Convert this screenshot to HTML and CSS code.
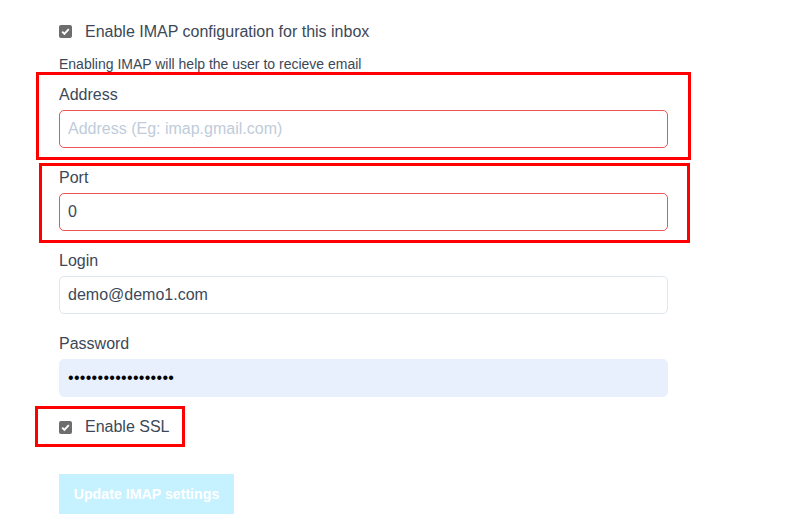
FILE: index.html
```html
<!DOCTYPE html>
<html lang="en">
<head>
<meta charset="utf-8">
<title>IMAP settings</title>
<link rel="stylesheet" href="styles.css">
</head>
<body>
<form class="imap-form">
  <div class="check-row">
    <span class="checkbox"><svg viewBox="0 0 13 13" width="13" height="13"><path d="M3.2 6.7 L5.4 8.9 L9.8 4.2" fill="none" stroke="#fff" stroke-width="1.9"/></svg></span>
    <span class="check-label">Enable IMAP configuration for this inbox</span>
  </div>
  <p class="help">Enabling IMAP will help the user to recieve email</p>

  <div class="field">
    <div class="annot annot-address"></div>
    <label class="field-label">Address</label>
    <input class="input input-error" type="text" placeholder="Address (Eg: imap.gmail.com)">
  </div>

  <div class="field">
    <div class="annot annot-port"></div>
    <label class="field-label">Port</label>
    <input class="input input-error" type="text" value="0">
  </div>

  <div class="field">
    <label class="field-label">Login</label>
    <input class="input" type="text" value="demo@demo1.com">
  </div>

  <div class="field">
    <label class="field-label">Password</label>
    <input class="input input-autofill" type="password" value="demopassword123456">
  </div>

  <div class="check-row check-ssl">
    <div class="annot annot-ssl"></div>
    <span class="checkbox"><svg viewBox="0 0 13 13" width="13" height="13"><path d="M3.2 6.7 L5.4 8.9 L9.8 4.2" fill="none" stroke="#fff" stroke-width="1.9"/></svg></span>
    <span class="check-label">Enable SSL</span>
  </div>

  <button class="btn" type="button">Update IMAP settings</button>
</form>
</body>
</html>
```
FILE: styles.css
```css
* { box-sizing: border-box; }
html, body { margin: 0; padding: 0; background: #fff; }
body {
  font-family: "Liberation Sans", Arial, sans-serif;
  color: #3c4858;
}
.imap-form {
  width: 609px;
  margin-left: 59px;
  padding-top: 20px;
  display: flex;
  flex-direction: column;
  align-items: stretch;
}
.check-row {
  position: relative;
  display: flex;
  align-items: center;
  height: 24px;
  font-size: 16px;
}
.checkbox {
  width: 13px;
  height: 13px;
  border-radius: 2px;
  background: #6d6d6d;
  display: flex;
  margin-right: 13px;
  margin-bottom: 2px;
  flex: none;
}
.checkbox svg { display: block; }
.help {
  margin: 10px 0 8px;
  font-size: 14px;
  line-height: 20px;
  color: #3c4858;
}
.field {
  position: relative;
  display: flex;
  flex-direction: column;
  margin-bottom: 17px;
}
.field-label {
  font-size: 16px;
  line-height: 26px;
  margin-bottom: 2px;
  color: #3c4858;
}
.input {
  height: 38px;
  width: 100%;
  border: 1px solid #e0e6ed;
  border-radius: 5px;
  padding: 0 8px;
  font-family: "Liberation Sans", Arial, sans-serif;
  font-size: 16px;
  color: #3c4858;
  background: #fff;
  outline: none;
}
.input::placeholder { color: #c0ccda; }
.input-error { border-color: #f05454; }
.input-autofill {
  background: #e8f0fe;
  border-color: #e8f0fe;
  color: #000;
  letter-spacing: 0.3px;
}
.check-ssl { margin-top: 1px; }
.check-ssl .checkbox { margin-bottom: 0; }
.btn {
  align-self: flex-start;
  margin-top: 35px;
  width: 175px;
  height: 40px;
  border: 0;
  background: #c6f1ff;
  color: #fff;
  font-family: "Liberation Sans", Arial, sans-serif;
  font-weight: bold;
  font-size: 14.2px;
  padding: 0;
}
.annot {
  position: absolute;
  border: 3px solid #ff0000;
  pointer-events: none;
}
.annot-address { top: -10px; left: -23px; width: 655px; height: 88px; }
.annot-port { top: -2px; left: -20px; width: 651px; height: 80px; }
.annot-ssl { top: -9px; left: -24px; width: 150px; height: 41px; }
```
